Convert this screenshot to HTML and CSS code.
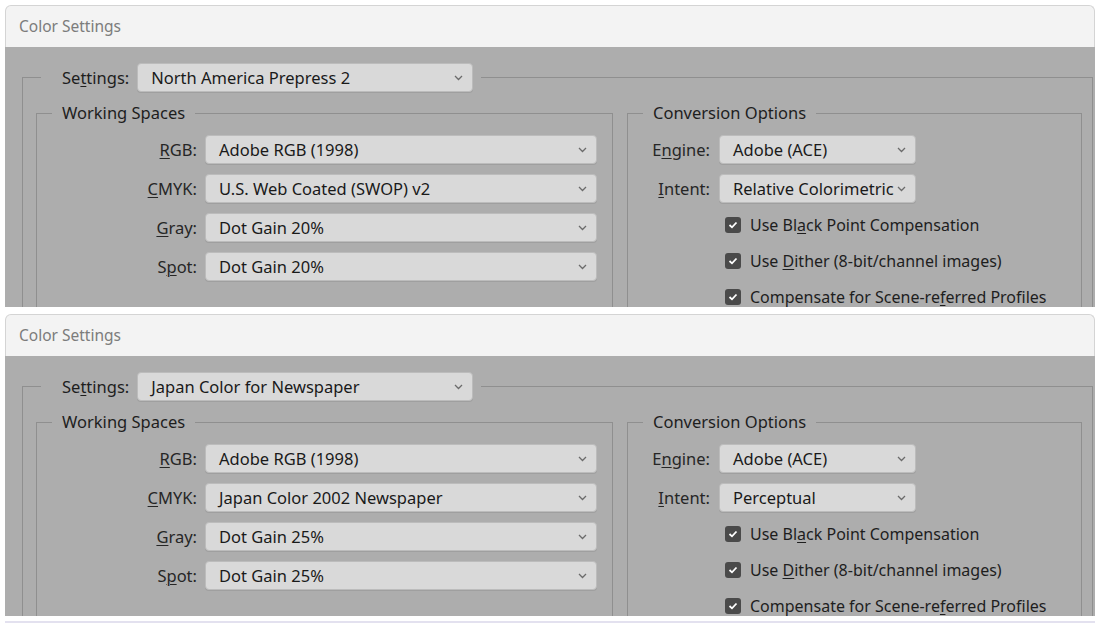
FILE: index.html
```html
<!DOCTYPE html>
<html lang="en">
<head>
    <meta charset="UTF-8">
    <title>Color Settings</title>
    <link rel="stylesheet" href="styles.css">
</head>
<body>
    <div class="window">
        <div class="titlebar">Color Settings</div>
        <div class="dialog">
            <fieldset class="group-outer">
                <legend class="settings-row">
                    <span class="label">Se<u>t</u>tings:</span>
                    <div class="dropdown dropdown-settings">
                        <span>North America Prepress 2</span>
                        <svg class="chevron" width="9" height="6" viewBox="0 0 9 6"><polyline points="1,1 4.5,4.5 8,1"/></svg>
                    </div>
                </legend>
                <div class="groups">
                    <fieldset class="group group-spaces">
                        <legend>Working Spaces</legend>
                        <div class="row">
                            <span class="label"><u>R</u>GB:</span>
                            <div class="dropdown"><span>Adobe RGB (1998)</span><svg class="chevron" width="9" height="6" viewBox="0 0 9 6"><polyline points="1,1 4.5,4.5 8,1"/></svg></div>
                        </div>
                        <div class="row">
                            <span class="label"><u>C</u>MYK:</span>
                            <div class="dropdown"><span>U.S. Web Coated (SWOP) v2</span><svg class="chevron" width="9" height="6" viewBox="0 0 9 6"><polyline points="1,1 4.5,4.5 8,1"/></svg></div>
                        </div>
                        <div class="row">
                            <span class="label"><u>G</u>ray:</span>
                            <div class="dropdown"><span>Dot Gain 20%</span><svg class="chevron" width="9" height="6" viewBox="0 0 9 6"><polyline points="1,1 4.5,4.5 8,1"/></svg></div>
                        </div>
                        <div class="row">
                            <span class="label">S<u>p</u>ot:</span>
                            <div class="dropdown"><span>Dot Gain 20%</span><svg class="chevron" width="9" height="6" viewBox="0 0 9 6"><polyline points="1,1 4.5,4.5 8,1"/></svg></div>
                        </div>
                    </fieldset>
                    <fieldset class="group group-conversion">
                        <legend>Conversion Options</legend>
                        <div class="row">
                            <span class="label">E<u>n</u>gine:</span>
                            <div class="dropdown"><span>Adobe (ACE)</span><svg class="chevron" width="9" height="6" viewBox="0 0 9 6"><polyline points="1,1 4.5,4.5 8,1"/></svg></div>
                        </div>
                        <div class="row">
                            <span class="label"><u>I</u>ntent:</span>
                            <div class="dropdown"><span>Relative Colorimetric</span><svg class="chevron" width="9" height="6" viewBox="0 0 9 6"><polyline points="1,1 4.5,4.5 8,1"/></svg></div>
                        </div>
                        <div class="checks">
                            <div class="check"><span class="box"><svg width="10" height="8" viewBox="0 0 10 8"><polyline points="1.5,4 4,6.3 8.5,1.5"/></svg></span><span>Use Bl<u>a</u>ck Point Compensation</span></div>
                            <div class="check"><span class="box"><svg width="10" height="8" viewBox="0 0 10 8"><polyline points="1.5,4 4,6.3 8.5,1.5"/></svg></span><span>Use <u>D</u>ither (8-bit/channel images)</span></div>
                            <div class="check"><span class="box"><svg width="10" height="8" viewBox="0 0 10 8"><polyline points="1.5,4 4,6.3 8.5,1.5"/></svg></span><span>Compensate for Scene-re<u>f</u>erred Profiles</span></div>
                        </div>
                    </fieldset>
                </div>
            </fieldset>
        </div>
    </div>

    <div class="window">
        <div class="titlebar">Color Settings</div>
        <div class="dialog">
            <fieldset class="group-outer">
                <legend class="settings-row">
                    <span class="label">Se<u>t</u>tings:</span>
                    <div class="dropdown dropdown-settings">
                        <span>Japan Color for Newspaper</span>
                        <svg class="chevron" width="9" height="6" viewBox="0 0 9 6"><polyline points="1,1 4.5,4.5 8,1"/></svg>
                    </div>
                </legend>
                <div class="groups">
                    <fieldset class="group group-spaces">
                        <legend>Working Spaces</legend>
                        <div class="row">
                            <span class="label"><u>R</u>GB:</span>
                            <div class="dropdown"><span>Adobe RGB (1998)</span><svg class="chevron" width="9" height="6" viewBox="0 0 9 6"><polyline points="1,1 4.5,4.5 8,1"/></svg></div>
                        </div>
                        <div class="row">
                            <span class="label"><u>C</u>MYK:</span>
                            <div class="dropdown"><span>Japan Color 2002 Newspaper</span><svg class="chevron" width="9" height="6" viewBox="0 0 9 6"><polyline points="1,1 4.5,4.5 8,1"/></svg></div>
                        </div>
                        <div class="row">
                            <span class="label"><u>G</u>ray:</span>
                            <div class="dropdown"><span>Dot Gain 25%</span><svg class="chevron" width="9" height="6" viewBox="0 0 9 6"><polyline points="1,1 4.5,4.5 8,1"/></svg></div>
                        </div>
                        <div class="row">
                            <span class="label">S<u>p</u>ot:</span>
                            <div class="dropdown"><span>Dot Gain 25%</span><svg class="chevron" width="9" height="6" viewBox="0 0 9 6"><polyline points="1,1 4.5,4.5 8,1"/></svg></div>
                        </div>
                    </fieldset>
                    <fieldset class="group group-conversion">
                        <legend>Conversion Options</legend>
                        <div class="row">
                            <span class="label">E<u>n</u>gine:</span>
                            <div class="dropdown"><span>Adobe (ACE)</span><svg class="chevron" width="9" height="6" viewBox="0 0 9 6"><polyline points="1,1 4.5,4.5 8,1"/></svg></div>
                        </div>
                        <div class="row">
                            <span class="label"><u>I</u>ntent:</span>
                            <div class="dropdown"><span>Perceptual</span><svg class="chevron" width="9" height="6" viewBox="0 0 9 6"><polyline points="1,1 4.5,4.5 8,1"/></svg></div>
                        </div>
                        <div class="checks">
                            <div class="check"><span class="box"><svg width="10" height="8" viewBox="0 0 10 8"><polyline points="1.5,4 4,6.3 8.5,1.5"/></svg></span><span>Use Bl<u>a</u>ck Point Compensation</span></div>
                            <div class="check"><span class="box"><svg width="10" height="8" viewBox="0 0 10 8"><polyline points="1.5,4 4,6.3 8.5,1.5"/></svg></span><span>Use <u>D</u>ither (8-bit/channel images)</span></div>
                            <div class="check"><span class="box"><svg width="10" height="8" viewBox="0 0 10 8"><polyline points="1.5,4 4,6.3 8.5,1.5"/></svg></span><span>Compensate for Scene-re<u>f</u>erred Profiles</span></div>
                        </div>
                    </fieldset>
                </div>
            </fieldset>
        </div>
    </div>

    <div class="bottom-rule"></div>
</body>
</html>
```

FILE: styles.css
```css
body {
    margin: 0;
    background: #ffffff;
    font-family: "Noto Sans", "Open Sans", sans-serif;
    font-size: 16.5px;
    color: #1e1e1e;
}
.window {
    width: 1090px;
    margin: 5px 0 0 5px;
}
.window + .window {
    margin-top: 7px;
}
.titlebar {
    height: 41px;
    line-height: 41px;
    padding-left: 13px;
    background: #f3f3f3;
    border: 1px solid #d4d4d4;
    border-bottom: none;
    border-radius: 6px 6px 0 0;
    font-size: 15.5px;
    color: #7c7c7c;
}
.dialog {
    height: 260px;
    background: #adadad;
    overflow: hidden;
    padding: 16px 0 0 17px;
    box-sizing: border-box;
}
fieldset {
    margin: 0;
    padding: 0;
    min-width: 0;
    border: 1px solid #8f8f8f;
    box-sizing: border-box;
}
legend {
    padding: 0;
}
u {
    text-decoration-thickness: 1px;
    text-underline-offset: 2px;
}

/* outer group: its legend is the Settings row */
.group-outer {
    width: 1071px;
    height: 400px;
}
.settings-row {
    display: flex;
    align-items: center;
    gap: 8px;
    margin-left: 18px;
    padding: 0 8px 0 21px;
}
.groups {
    display: flex;
    gap: 14px;
    margin-top: 10px;
    padding-left: 13px;
}
.group legend {
    margin-left: 15px;
    padding: 0 10px;
    line-height: 22px;
}
.group-spaces {
    width: 577px;
    padding: 11px 0 10px;
}
.group-conversion {
    width: 455px;
    height: 300px;
    padding-top: 11px;
}
.row {
    display: flex;
    align-items: center;
    gap: 8px;
    margin-bottom: 10px;
}
.row:last-child {
    margin-bottom: 0;
}
.row .label {
    width: 160px;
    text-align: right;
    color: #262626;
}
.group-conversion .row {
    gap: 9px;
}
.group-conversion .row .label {
    width: 82px;
}

/* dropdown boxes */
.dropdown {
    display: flex;
    align-items: center;
    justify-content: space-between;
    width: 392px;
    height: 29px;
    padding: 0 9px 0 13px;
    box-sizing: border-box;
    background: #d9d9d9;
    border: 1px solid #bcbcbc;
    border-radius: 4px;
    box-shadow: 0 1px 0 rgba(0, 0, 0, 0.08);
    color: #1a1a1a;
    white-space: nowrap;
}
.dropdown-settings {
    width: 336px;
}
.group-conversion .dropdown {
    width: 197px;
}
.chevron {
    flex-shrink: 0;
}
.chevron polyline {
    fill: none;
    stroke: #6b6b6b;
    stroke-width: 1.3;
}

/* checkbox options */
.checks {
    display: flex;
    flex-direction: column;
    gap: 12px;
    margin-top: 8px;
    padding-left: 97px;
}
.check {
    display: flex;
    align-items: center;
    gap: 9px;
    height: 24px;
    font-size: 16px;
    white-space: nowrap;
}
.box {
    display: flex;
    align-items: center;
    justify-content: center;
    width: 16px;
    height: 16px;
    background: #4a4a4a;
    border-radius: 3px;
}
.box polyline {
    fill: none;
    stroke: #ffffff;
    stroke-width: 1.8;
}

.bottom-rule {
    width: 1090px;
    height: 2px;
    margin: 5px 0 0 5px;
    background: #e3e1ef;
}
```
